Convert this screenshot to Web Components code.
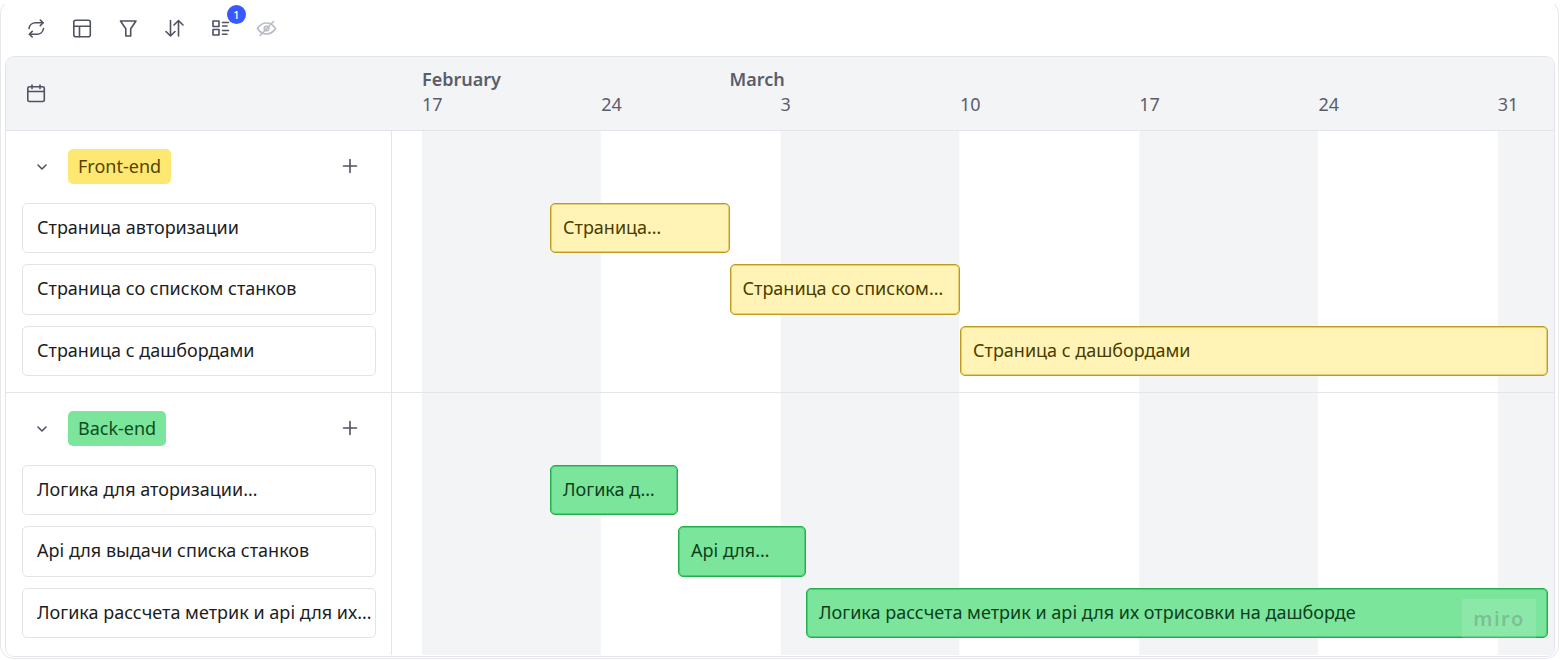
<!doctype html>
<html lang="ru">
<head>
<meta charset="utf-8">
<title>Gantt</title>
<style>
  html, body { margin: 0; background: #fff; }
  body { font-family: "Noto Sans", "Open Sans", sans-serif; }
</style>
</head>
<body>
<gantt-chart>
  <gantt-toolbar></gantt-toolbar>
  <gantt-board>
    <gantt-head></gantt-head>
    <gantt-group label="Front-end" tone="yellow">
      <gantt-task name="Страница авторизации" bar="Страница…" from="158" span="180"></gantt-task>
      <gantt-task name="Страница со списком станков" bar="Страница со списком…" from="337.500" span="230.500"></gantt-task>
      <gantt-task name="Страница с дашбордами" bar="Страница с дашбордами" from="568" span="588"></gantt-task>
    </gantt-group>
    <gantt-group label="Back-end" tone="green">
      <gantt-task name="Логика для аторизации…" bar="Логика д…" from="158" span="128"></gantt-task>
      <gantt-task name="Api для выдачи списка станков" bar="Api для…" from="286" span="128"></gantt-task>
      <gantt-task name="Логика рассчета метрик и api для их…" bar="Логика рассчета метрик и api для их отрисовки на дашборде" from="414" span="742"></gantt-task>
    </gantt-group>
    <miro-mark></miro-mark>
  </gantt-board>
</gantt-chart>

<script>
const icons = {
  sync: `<path d="M3 10.500C3.500 7 6.300 4.800 9.500 4.800H17"/><path d="M14.300 2l2.800 2.800-2.800 2.800"/><path d="M17.500 10.500c-.5 3.500-3.300 5.700-6.500 5.700H3.500"/><path d="M6.200 13.400l-2.800 2.800L6.200 19"/>`,
  layout: `<rect x="1.800" y="2.200" width="16.500" height="16.500" rx="2"/><path d="M1.800 8.300h16.500M7.500 8.300v10.400"/>`,
  filter: `<path d="M2.500 3h15.500l-5.300 7.800v7.200H7.800v-7.200z"/>`,
  sort: `<path d="M6.500 2.500v15.500M2 13.500l4.500 4.500 4.500-4.500"/><path d="M14.500 18V2.500M10 7l4.500-4.500L19 7"/>`,
  list: `<rect x="3" y="3" width="6" height="5.500"/><rect x="3" y="11.500" width="6" height="5.500"/><path d="M12.500 4.500h6M12.500 8h4.500M12.500 12.500h6M12.500 16.200h4.500"/>`,
  eye: `<path d="M1.500 10.500s3.500-5.500 9-5.500 9 5.500 9 5.500-3.500 5.500-9 5.500-9-5.500-9-5.500z"/><circle cx="10.500" cy="10.500" r="2.300"/><path d="M4 17.500 17.500 3.500"/>`,
  calendar: `<rect x="1.800" y="3.800" width="16.500" height="14.700" rx="1.500"/><path d="M1.800 8.500h16.500M6 2v3.500M14 2v3.500"/>`
};

const svg = (name, size = 21) =>
  `<svg width="${size}" height="${size}" viewBox="0 0 21 21" fill="none" stroke="currentColor" stroke-width="1.6" stroke-linecap="round" stroke-linejoin="round">${icons[name]}</svg>`;

// all elements are plain shadow + template string, no state to keep
class Base extends HTMLElement {
  constructor() {
    super();
    this.attachShadow({ mode: "open" });
  }
  connectedCallback() {
    this.shadowRoot.innerHTML = this.markup();
  }
}

class GanttChart extends Base {
  markup() {
    return `
      <style>
        :host {
          display: block;
          box-sizing: border-box;
          width: 1559px;
          height: 659px;
          padding: 0 3px 3px 4px;
          border: 1px solid #e8e9ed;
          border-top-color: transparent;
          border-radius: 14px;
          overflow: hidden;
        }
      </style>
      <slot></slot>`;
  }
}

class GanttToolbar extends Base {
  markup() {
    const items = ["sync", "layout", "filter", "sort", "list", "eye"];
    return `
      <style>
        :host {
          display: flex;
          align-items: center;
          gap: 25px;
          height: 55px;
          padding-left: 21px;
          color: #4f5260;
        }
        .tool { position: relative; display: flex; width: 21px; height: 21px; }
        .off { color: #b9bcc6; }
        .badge {
          position: absolute;
          top: -13px;
          left: 17px;
          width: 19px;
          height: 19px;
          border-radius: 50%;
          background: #3859ff;
          color: #fff;
          font: 500 11px/19px "Noto Sans", sans-serif;
          text-align: center;
        }
      </style>
      ${items.map((n) => `
        <span class="tool ${n === "eye" ? "off" : ""}">
          ${svg(n)}
          ${n === "list" ? `<span class="badge">1</span>` : ""}
        </span>`).join("")}`;
  }
}

class GanttBoard extends Base {
  markup() {
    return `
      <style>
        :host {
          display: block;
          position: relative;
          height: 599px;
          border: 1px solid #e3e5ea;
          border-radius: 9px;
          overflow: hidden;
          background: #fff;
        }
      </style>
      <slot></slot>`;
  }
}

class GanttHead extends Base {
  markup() {
    const days = [17, 24, 3, 10, 17, 24, 31];
    return `
      <style>
        :host {
          display: grid;
          grid-template-columns: 416px 1fr;
          box-sizing: border-box;
          height: 73.500px;
          background: #f3f4f6;
          border-bottom: 1px solid #e3e5ea;
          color: #5a5d6b;
          font-size: 18px;
          line-height: 25px;
        }
        .cal { display: flex; align-items: center; padding-left: 20px; color: #4f5260; }
        .months { display: flex; font-weight: 600; padding-top: 10px; }
        .months span:first-child { width: 307.500px; }
        .days { display: grid; grid-template-columns: repeat(7, 179.300px); }
      </style>
      <div class="cal">${svg("calendar")}</div>
      <div>
        <div class="months"><span>February</span><span>March</span></div>
        <div class="days">${days.map((d) => `<span>${d}</span>`).join("")}</div>
      </div>`;
  }
}

const tones = {
  yellow: { tag: "#ffe872", tagText: "#544400", bar: "#fff4b5", line: "#bf9a1e", soft: "#e6cd70", barText: "#4a3c00" },
  green: { tag: "#7ae59b", tagText: "#0e4d22", bar: "#7ae59b", line: "#22b04d", soft: "#4fcb75", barText: "#0e3f1d" }
};

class GanttGroup extends Base {
  markup() {
    const t = tones[this.getAttribute("tone")];
    return `
      <style>
        :host {
          display: flex;
          flex-direction: column;
          box-sizing: border-box;
          height: 262px;
          border-bottom: 1px solid #e3e5ea;
          --bar: ${t.bar};
          --bar-line: ${t.line};
          --bar-soft: ${t.soft};
          --bar-text: ${t.barText};
          background:
            linear-gradient(90deg, #f3f4f6 50%, transparent 50%) 416px 0 / 358.600px 100%;
        }
        :host(:last-of-type) { border-bottom: 0; }
        .top {
          display: flex;
          align-items: flex-start;
          box-sizing: border-box;
          width: 386px;
          height: 72px;
          padding: 18px 31px 0 29px;
          background: #fff;
          border-right: 1px solid #e3e5ea;
          color: #4f5260;
        }
        .chev { display: flex; margin-top: 11px; }
        .tag {
          margin-left: 19px;
          padding: 0 10px;
          height: 35px;
          line-height: 35px;
          border-radius: 5px;
          font-size: 18px;
          background: ${t.tag};
          color: ${t.tagText};
        }
        .plus { display: flex; margin-left: auto; margin-top: 7px; }
        slot { display: block; }
        .rest { flex: 1; width: 386px; box-sizing: border-box; background: #fff; border-right: 1px solid #e3e5ea; }
      </style>
      <div class="top">
        <span class="chev">
          <svg width="14" height="14" viewBox="0 0 14 14" fill="none" stroke="currentColor" stroke-width="1.600" stroke-linecap="round" stroke-linejoin="round"><path d="M3 5l4 4 4-4"/></svg>
        </span>
        <span class="tag">${this.getAttribute("label")}</span>
        <span class="plus">
          <svg width="20" height="20" viewBox="0 0 20 20" fill="none" stroke="currentColor" stroke-width="1.600" stroke-linecap="round"><path d="M10 3.500v13M3.500 10h13"/></svg>
        </span>
      </div>
      <slot></slot>
      <div class="rest"></div>`;
  }
}

class GanttTask extends Base {
  markup() {
    const from = this.getAttribute("from");
    const span = this.getAttribute("span");
    return `
      <style>
        :host {
          display: grid;
          grid-template-columns: 386px 1fr;
          height: 61.500px;
          font-size: 18px;
        }
        .side {
          box-sizing: border-box;
          padding: 0 15px 0 16px;
          background: #fff;
          border-right: 1px solid #e3e5ea;
        }
        .card {
          box-sizing: border-box;
          width: 354px;
          height: 50.500px;
          padding-left: 14px;
          line-height: 47px;
          border: 1px solid #e1e3e8;
          border-radius: 5px;
          color: #1c1d22;
          white-space: nowrap;
          overflow: hidden;
        }
        .bar {
          box-sizing: border-box;
          height: 50.500px;
          padding-left: 12px;
          line-height: 47px;
          border: 1px solid var(--bar-line);
          border-radius: 5px;
          background: var(--bar);
          box-shadow: inset 0 0 0 1px var(--bar-soft);
          color: var(--bar-text);
          white-space: nowrap;
          overflow: hidden;
        }
      </style>
      <div class="side"><div class="card">${this.getAttribute("name")}</div></div>
      <div><div class="bar" style="margin-left:${from}px;width:${span}px">${this.getAttribute("bar")}</div></div>`;
  }
}

class MiroMark extends Base {
  markup() {
    return `
      <style>
        :host {
          position: absolute;
          right: 18px;
          bottom: 18px;
          width: 74px;
          height: 39px;
          background: rgba(255, 255, 255, 0.14);
          color: rgba(90, 100, 110, 0.32);
          font: 600 20px/39px "Noto Sans", sans-serif;
          letter-spacing: 1.500px;
          text-align: center;
        }
      </style>
      miro`;
  }
}

customElements.define("gantt-chart", GanttChart);
customElements.define("gantt-toolbar", GanttToolbar);
customElements.define("gantt-board", GanttBoard);
customElements.define("gantt-head", GanttHead);
customElements.define("gantt-group", GanttGroup);
customElements.define("gantt-task", GanttTask);
customElements.define("miro-mark", MiroMark);
</script>
</body>
</html>
